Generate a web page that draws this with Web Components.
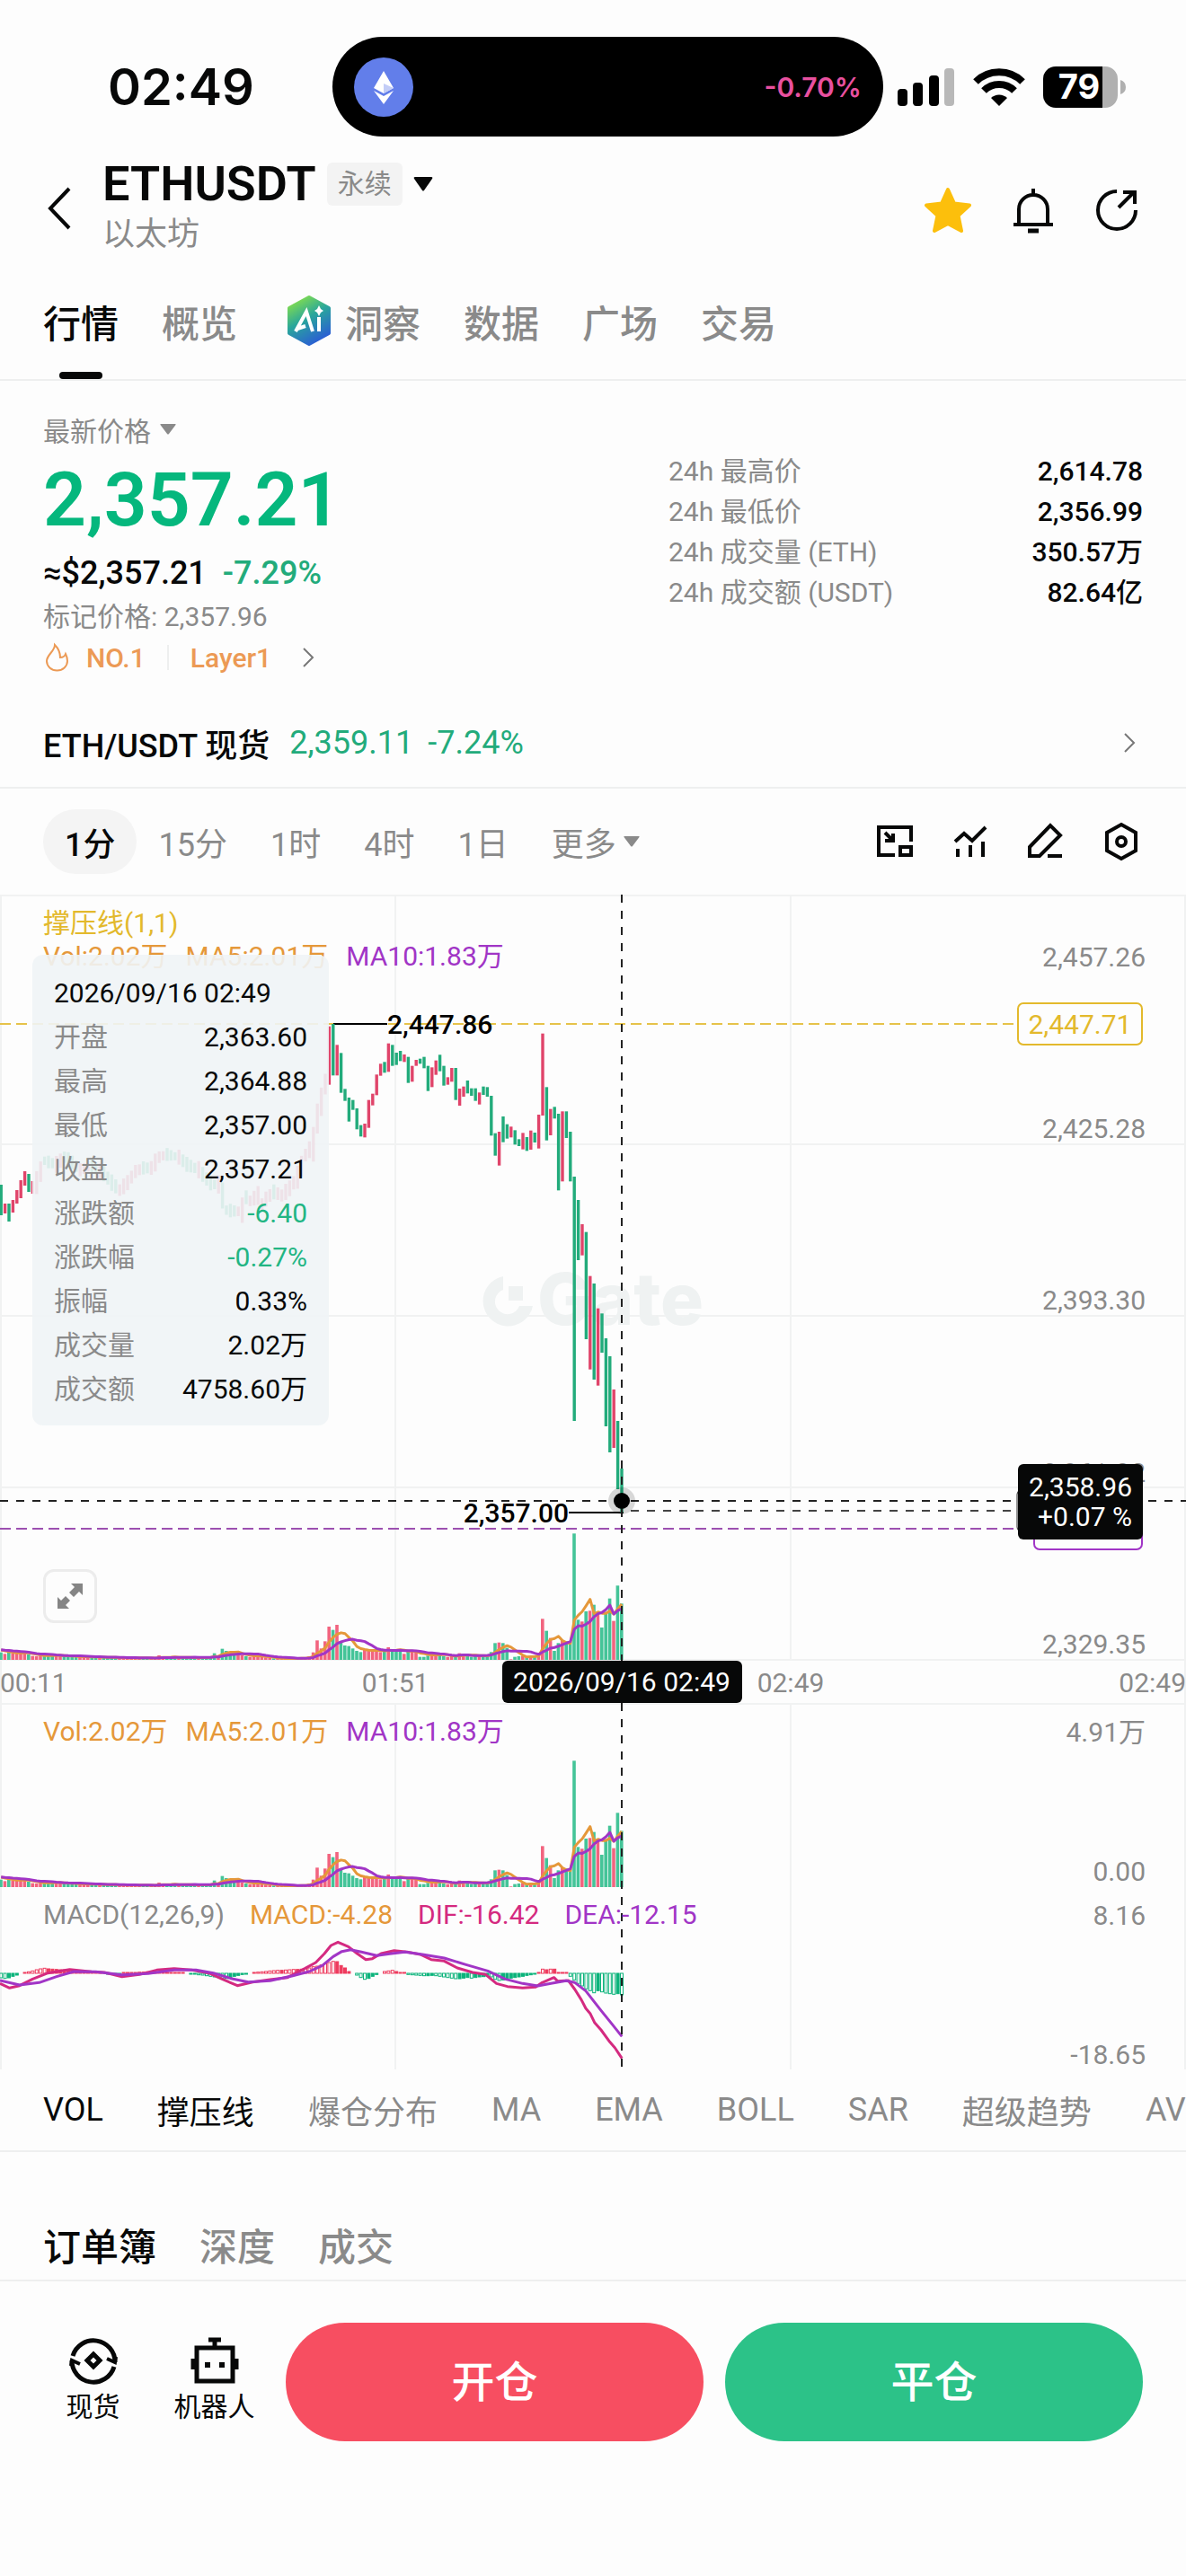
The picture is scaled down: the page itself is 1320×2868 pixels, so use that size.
<!DOCTYPE html>
<html lang="zh-CN">
<head>
<meta charset="utf-8">
<meta name="viewport" content="width=device-width, initial-scale=1">
<title>ETHUSDT</title>
<style>
	body {
		margin: 0;
		min-height: 100vh;
		background: #fdfdfd;
		color: #070808;
		font-family: Roboto, "Noto Sans CJK SC", sans-serif;
		font-size: 30px;
		--muted: #8a8a8a;
		--line: #eeefef;
		--up: #e0446a;
		--down: #22ab7b;
		--green: #05b77d;
		--orange: #e5983a;
		--purple: #a135c6;
		--pink: #d42a80;
		--yellow: #e3b92c;
	}
</style>
</head>
<body>
<status-bar></status-bar>
<market-header symbol="ETHUSDT" kind="永续">以太坊</market-header>
<tab-nav underline>
	<nav-tab active>行情</nav-tab>
	<nav-tab>概览</nav-tab>
	<nav-tab><ui-icon name="ai" slot="icon"></ui-icon>洞察</nav-tab>
	<nav-tab>数据</nav-tab>
	<nav-tab>广场</nav-tab>
	<nav-tab>交易</nav-tab>
</tab-nav>
<price-summary>
	<stat-row label="24h 最高价">2,614.78</stat-row>
	<stat-row label="24h 最低价">2,356.99</stat-row>
	<stat-row label="24h 成交量 (ETH)">350.57万</stat-row>
	<stat-row label="24h 成交额 (USDT)">82.64亿</stat-row>
</price-summary>
<spot-link></spot-link>
<interval-bar></interval-bar>
<kline-chart></kline-chart>
<indicator-bar></indicator-bar>
<tab-nav class="orders">
	<nav-tab active>订单簿</nav-tab>
	<nav-tab>深度</nav-tab>
	<nav-tab>成交</nav-tab>
</tab-nav>
<action-bar></action-bar>

<script>
const base = `
	*, *:before, *:after { box-sizing: border-box; }
	button {
		margin: 0;
		padding: 0;
		border: none;
		background: none;
		color: inherit;
		font: inherit;
		cursor: pointer;
	}
	a { color: inherit; text-decoration: none; }
	svg { display: block; }
`;

class BaseElement extends HTMLElement {
	constructor() {
		super();
		this.attachShadow({ mode: 'open' });
	}

	connectedCallback() {
		this.shadowRoot.innerHTML = `<style>${base}${this.css()}</style>${this.html()}`;
	}

	css() {
		return ':host { display: block; }';
	}
}

const line = (w, h, body, width = 4) =>
	`<svg width="${w}" height="${h}" viewBox="0 0 ${w} ${h}" fill="none" stroke="currentColor" stroke-width="${width}">${body}</svg>`;
const solid = (w, h, body) =>
	`<svg width="${w}" height="${h}" viewBox="0 0 ${w} ${h}" fill="currentColor">${body}</svg>`;

const icons = {
	back: line(28, 48, '<path d="M25 2 4 24l21 22"/>'),
	caret: solid(22, 16, '<path d="M2 0h18q2 0 1 2L12 15q-1 1-2 0L1 2Q0 0 2 0z"/>'),
	smallCaret: solid(18, 12, '<path d="M1 0h16q1 0 .5 1L10 11q-1 1-2 0L.5 1Q0 0 1 0z"/>'),
	chevron: line(14, 24, '<path d="M2 2l10 10L2 22"/>', 2),
	star: solid(54, 52, '<path fill="#fcbf0c" stroke="#fcbf0c" stroke-width="4" stroke-linejoin="round" d="M27 3l7 15.500 17 2-12.500 11.500 3.500 17L27 41l-15 8 3.500-17L3 20.500l17-2z"/>'),
	bell: line(48, 52, '<path d="M24 2v8M8 42V25a16 16 0 0 1 32 0v17M2 42h44"/><path d="M18 49h12" stroke-width="5"/>'),
	share: line(50, 50, '<path d="M25 4A21 21 0 1 0 46 25"/><path d="M27 22 44 5M32 5h13v13"/>', 4),
	ai: `<svg width="56" height="60" viewBox="0 0 56 60">
		<defs><linearGradient id="g" x1="0.2" y1="0" x2="0.7" y2="1">
			<stop offset="0" stop-color="#86e04a"/><stop offset="0.45" stop-color="#2aa79b"/><stop offset="1" stop-color="#2a5bd6"/>
		</linearGradient></defs>
		<path fill="url(#g)" stroke="url(#g)" stroke-width="4" stroke-linejoin="round" d="M32 4l22 12v28L32 56 10 44V16z"/>
		<g fill="none" stroke="#fff" stroke-width="4"><path d="M17 42 29 20l7 22M19 39l9-3"/><path d="M43 26v16"/></g>
		<path fill="#fff" d="M43 13l2 4 3 2-3 2-2 4-2-4-3-2 3-2z"/>
	</svg>`,
	flame: line(30, 34, '<path d="M13 3c0 7-9 11-9 18a11 10 0 0 0 23 0c0-4-1-6-2-8-1 3-3 4-6 4 0-6-2-10-6-14z"/>', 2),
	pip: line(48, 48, '<path d="M24 39H6V8h36v16"/><path d="M13 14l9 9M22 15v8h-9"/><path d="M30 30h12v9H30z"/>'),
	trend: line(48, 48, '<path d="M7 24 17 15l9 8L41 8M10 32v9M24 28v13M38 24v17"/>'),
	pen: line(48, 48, '<path d="M6 30 29 6l11 11-23 23H6zM26 40h16"/>'),
	hex: line(48, 48, '<path d="M24 5l16 9v20l-16 9-16-9V14z"/><circle cx="24" cy="24" r="5"/>'),
	expand: `<svg width="30" height="30" viewBox="0 0 30 30" fill="#858585"><path d="M16 1h13v13l-4-4-6 6-5-5 6-6zM14 29H1V16l4 4 5-5 5 5-5 5z"/></svg>`,
	spot: line(56, 56, '<path d="M5 23A24 24 0 0 1 52 30M51 35A24 24 0 0 1 4 28"/><path d="M28 21l7 7-7 7-7-7z"/><path d="M43 26l9 4 1-6M13 32l-9-4-1 6" stroke-width="4"/>', 5),
	robot: line(56, 56, '<path d="M8 14h40v37H8zM28 14V6M21 5h14M4 26v12M52 26v12"/><path d="M20 30v6M36 30v6" stroke-width="6"/>', 5)
};

class UiIcon extends BaseElement {
	css() {
		return ':host { display: block; flex: none; }';
	}

	html() {
		return icons[this.getAttribute('name')] || '';
	}
}

customElements.define('ui-icon', UiIcon);

class StatusBar extends BaseElement {
	css() {
		return `
		:host {
			display: grid;
			grid-template-columns: 28% 1fr 337px;
			align-items: center;
			padding-top: 41px;
			font-family: Inter, sans-serif;
			font-weight: 600;
		}
		.time { padding-left: 120px; font-size: 56px; }
		.island {
			display: flex;
			align-items: center;
			justify-content: space-between;
			height: 111px;
			padding: 0 24px;
			border-radius: 56px;
			background: #000;
			color: #e8509f;
		}
		.signals { display: flex; align-items: center; gap: 20px; padding-left: 16px; }
		`;
	}

	html() {
		return `
		<span class="time">02:49</span>
		<div class="island">
			<svg width="66" height="66" viewBox="0 0 66 66">
				<circle cx="33" cy="33" r="33" fill="#627eea"/>
				<path fill="#fff" d="M33 15 22 34l11 6 11-6zM22 37l11 15 11-15-11 6z"/>
				<path fill="#c3cdf7" d="M33 29v11l11-6z"/>
			</svg>
			<span>-0.70%</span>
		</div>
		<div class="signals">
			<svg width="64" height="44" viewBox="0 0 64 44">
				<rect y="24" width="11" height="19" rx="4"/>
				<rect x="17" y="17" width="11" height="26" rx="4"/>
				<rect x="35" y="9" width="11" height="34" rx="4"/>
				<rect x="52" y="1" width="11" height="42" rx="4" fill="#b8b8b8"/>
			</svg>
			<svg width="58" height="44" viewBox="0 0 58 44">
				<g fill="none" stroke="#000" stroke-width="8"><path d="M3 16a37 37 0 0 1 52 0M12 26a24 24 0 0 1 34 0"/></g>
				<path d="M29 43l-9-9a13 13 0 0 1 18 0z"/>
			</svg>
			<svg width="92" height="46" viewBox="0 0 92 46">
				<path fill="#b0b0b0" d="M65 0h4a14 14 0 0 1 14 14v18a14 14 0 0 1-14 14h-4zM86 15q6 2 6 8t-6 8z"/>
				<path d="M14 0h52v46H14A14 14 0 0 1 0 32V14A14 14 0 0 1 14 0z"/>
				<text x="40" y="36" fill="#fff" font-size="38" font-weight="700" text-anchor="middle">79</text>
			</svg>
		</div>
		`;
	}
}

customElements.define('status-bar', StatusBar);

class MarketHeader extends BaseElement {
	css() {
		return `
		:host { display: flex; align-items: center; padding: 24px 52px 0 52px; }
		.name { flex: 1; margin-left: 34px; }
		h1 {
			display: flex;
			align-items: center;
			gap: 12px;
			margin: 0;
			font-size: 54px;
			font-weight: 600;
			line-height: 58px;
		}
		.kind {
			padding: 0 12px;
			border-radius: 6px;
			background: #f3f3f3;
			color: var(--muted);
			font-size: 30px;
			font-weight: 400;
			line-height: 48px;
		}
		.sub { color: var(--muted); font-size: 36px; line-height: 54px; }
		.tools { display: flex; align-items: center; gap: 44px; padding-top: 4px; }
		`;
	}

	html() {
		return `
		<button aria-label="返回">${icons.back}</button>
		<div class="name">
			<h1>${this.getAttribute('symbol')}<span class="kind">${this.getAttribute('kind')}</span>${icons.caret}</h1>
			<div class="sub"><slot></slot></div>
		</div>
		<div class="tools">
			<button aria-label="收藏">${icons.star}</button>
			<button aria-label="提醒">${icons.bell}</button>
			<button aria-label="分享">${icons.share}</button>
		</div>
		`;
	}
}

customElements.define('market-header', MarketHeader);

class TabNav extends BaseElement {
	css() {
		return `
		:host {
			display: flex;
			gap: 48px;
			padding: 24px 48px 0;
			border-bottom: 2px solid var(--line);
			--tab-height: 90px;
			--tab-foot: 20px;
			--mark: block;
		}
		:host(.orders) {
			padding-top: 72px;
			--tab-height: 60px;
			--tab-foot: 10px;
			--mark: none;
		}
		`;
	}

	html() {
		return '<slot></slot>';
	}
}

customElements.define('tab-nav', TabNav);

class NavTab extends BaseElement {
	css() {
		return `
		:host { display: block; color: var(--muted); font-size: 42px; font-weight: 500; }
		:host([active]) { color: #070808; }
		button {
			display: flex;
			align-items: center;
			position: relative;
			height: calc(var(--tab-height) + var(--tab-foot));
			padding-bottom: var(--tab-foot);
		}
		::slotted(ui-icon) { margin-right: 16px; }
		:host([active]) button:after {
			content: '';
			display: var(--mark);
			position: absolute;
			left: calc(50% - 24px);
			bottom: 0;
			width: 48px;
			height: 8px;
			border-radius: 4px;
			background: #070808;
		}
		`;
	}

	html() {
		return '<button><slot name="icon"></slot><span><slot></slot></span></button>';
	}
}

customElements.define('nav-tab', NavTab);

class StatRow extends BaseElement {
	css() {
		return `
		:host { display: flex; justify-content: space-between; line-height: 45px; }
		.label { color: var(--muted); }
		.value { font-weight: 500; }
		`;
	}

	html() {
		return `<span class="label">${this.getAttribute('label')}</span><span class="value"><slot></slot></span>`;
	}
}

customElements.define('stat-row', StatRow);

class PriceSummary extends BaseElement {
	css() {
		return `
		:host { display: grid; grid-template-columns: 1fr 528px; padding: 30px 48px 0; }
		.row { display: flex; align-items: center; }
		.latest { gap: 10px; height: 48px; color: var(--muted); }
		.price { height: 108px; color: var(--green); font-size: 84px; font-weight: 600; }
		.change { gap: 18px; height: 56px; font-size: 36px; font-weight: 500; }
		.change span { color: #22ab7b; }
		.mark { height: 36px; color: var(--muted); }
		.tags { gap: 24px; height: 60px; color: #ec9a55; font-weight: 500; }
		.tags a { display: flex; align-items: center; gap: 18px; }
		.tags i { width: 2px; height: 28px; background: var(--line); }
		.tags .more { margin-left: 10px; color: #777; }
		.stats { padding-top: 48px; }
		`;
	}

	html() {
		return `
		<div>
			<button class="row latest">最新价格${icons.smallCaret}</button>
			<div class="row price">2,357.21</div>
			<div class="row change">≈$2,357.21<span>-7.29%</span></div>
			<div class="row mark">标记价格: 2,357.96</div>
			<div class="row tags">
				<a href="#rank">${icons.flame}NO.1</a><i></i><a href="#layer1">Layer1</a>
				<button class="more" aria-label="更多标签">${icons.chevron}</button>
			</div>
		</div>
		<div class="stats"><slot></slot></div>
		`;
	}
}

customElements.define('price-summary', PriceSummary);

class SpotLink extends BaseElement {
	css() {
		return `
		:host { display: block; margin-top: 20px; border-bottom: 2px solid var(--line); font-size: 36px; }
		a { display: flex; align-items: center; height: 94px; padding: 0 56px 4px 48px; }
		b { font-weight: 500; margin-right: 22px; }
		.quote { display: flex; flex: 1; gap: 16px; color: #22ab7b; }
		svg { color: #777; }
		`;
	}

	html() {
		return `<a href="#spot"><b>ETH/USDT 现货</b><span class="quote"><span>2,359.11</span><span>-7.24%</span></span>${icons.chevron}</a>`;
	}
}

customElements.define('spot-link', SpotLink);

class IntervalBar extends BaseElement {
	css() {
		return `
		:host {
			display: flex;
			align-items: center;
			justify-content: space-between;
			height: 118px;
			padding: 0 48px;
			font-size: 36px;
		}
		.list, .tools { display: flex; align-items: center; }
		.list button {
			display: flex;
			align-items: center;
			gap: 8px;
			height: 72px;
			padding: 0 24px;
			border-radius: 36px;
			color: var(--muted);
		}
		.list .active { background: #f4f4f4; color: #070808; font-weight: 500; }
		.tools { gap: 36px; }
		`;
	}

	html() {
		const items = ['1分', '15分', '1时', '4时', '1日'];
		return `
		<div class="list">
			${items.map((t, i) => `<button class="${i ? '' : 'active'}">${t}</button>`).join('')}
			<button>更多${icons.smallCaret}</button>
		</div>
		<div class="tools">
			<button aria-label="画中画">${icons.pip}</button>
			<button aria-label="指标">${icons.trend}</button>
			<button aria-label="画线">${icons.pen}</button>
			<button aria-label="设置">${icons.hex}</button>
		</div>
		`;
	}
}

customElements.define('interval-bar', IntervalBar);

// Chart drawing. Candles are one minute each, the last one sits on the crosshair.
const STEP = 4.4;
const LAST_X = 692;

// [direction, top, bottom] in thirds of a unit below y = 64
const firstCandles = 'g777-879 r840-873 g840-900 r828-870 r795-840 r762-822 r732-780 g741-801 r765-807';
const lastCandles =
	'r248-443 g240-412 r310-412 g337-470 g457-497 g486-566 g494-527 g522-592 g578-616 r573-619 ' +
	'r494-587 r473-512 r409-478 r373-413 g367-403 r305-400 g310-380 g336-377 g330-364 r342-367 ' +
	'g350-437 r380-433 r360-380 g356-373 g350-388 g380-464 r385-451 r362-410 g343-398 g380-446 ' +
	'r418-443 r387-433 g387-494 r456-513 r449-483 g429-472 g455-480 g455-497 r469-509 g449-477 ' +
	'g451-483 g480-613 g605-680 r600-713 g549-635 g575-623 r583-619 g595-643 g625-648 r604-659 ' +
	'g618-664 r596-660 g603-636 r543-656 r272-546 g451-629 r524-612 g517-556 g540-796 r532-766 ' +
	'g532-621 g600-766 g750-1566 g828-1029 r909-1013 g935-1293 r1082-1394 g1107-1428 r1190-1448 g1207-1338 ' +
	'g1290-1584 g1350-1671 r1461-1656 g1566-1794 g1725-1872';
const middlePath = [
	[9, 770], [11, 697], [14, 709], [16, 685], [18, 703], [20, 727], [23, 715], [26, 740], [28, 770], [30, 795],
	[32, 770], [34, 733], [36, 721], [38, 721], [40, 685], [42, 676], [45, 685], [47, 709], [49, 721], [50, 727],
	[52, 758], [53, 776], [55, 776], [56, 813], [57, 862], [60, 866], [61, 862], [62, 819], [63, 831], [65, 813],
	[66, 844], [67, 825], [69, 801], [71, 813], [73, 789], [75, 752], [77, 678], [79, 642], [80, 556], [81, 500],
	[82, 441], [83, 400]
];

const parseCandles = text =>
	text.split(' ').map(item => {
		const [top, bottom] = item.slice(1).split('-').map(Number);
		return { up: item[0] === 'r', top, bottom };
	});

function middleCandles() {
	const out = [];
	for (let i = 9; i < 83; i++) {
		const k = middlePath.findIndex(p => p[0] > i);
		const [x0, y0] = middlePath[k - 1];
		const [x1, y1] = middlePath[k];
		const slope = (y1 - y0) / (x1 - x0);
		const y = y0 + slope * (i - x0);
		const half = Math.abs(slope) / 2 + 12 + ((i * 7) % 11);
		out.push({ up: slope < 0 || i % 5 === 0, top: y - half, bottom: y + half });
	}
	return out;
}

const candles = [...parseCandles(firstCandles), ...middleCandles(), ...parseCandles(lastCandles)];

const volumes = [
	25, 20, 24, 22, 26, 24, 25, 18, 13, 12, 14, 15, 16, 15, 14, 15, 13, 12, 11, 10,
	11, 9, 10, 9, 8, 9, 8, 8, 7, 8, 7, 7, 6, 7, 6, 7, 6, 6, 6, 5,
	15, 8, 7, 9, 10, 8, 7, 8, 7, 9, 8, 7, 8, 10, 22, 14, 37, 30, 24, 22,
	18, 15, 12, 10, 14, 16, 10, 8, 6, 5, 4, 4, 5, 4, 5, 5, 6, 8, 12, 25,
	65, 38, 62, 111, 100, 117, 62, 48, 46, 38, 30, 26, 34, 34, 32, 30, 26, 28, 42, 30,
	34, 34, 20, 28, 32, 24, 10, 10, 14, 26, 22, 16, 12, 10, 12, 12, 22, 20, 16, 10,
	12, 14, 18, 14, 26, 56, 58, 56, 40, 2, 10, 12, 14, 10, 8, 12, 20, 137, 97, 73,
	30, 56, 66, 62, 60, 422, 134, 128, 162, 164, 184, 160, 108, 160, 205, 130, 248, 188
];

const macd = [
	-15, -17, -15, -10, -6, 0, 3, 5, 8, 12, 15, 17, 15, 14, 13, 12, 12, 10, 8, 6,
	5, 4, 3, 2, 1, 1, 0, -1, -2, -2, -1, 1, 2, 2, 3, 4, 4, 5, 5, 4,
	4, 3, 3, 2, 2, 1, 1, 0, -1, -3, -5, -6, -8, -10, -12, -14, -16, -17, -14, -10,
	-7, -4, -2, 0, 2, 4, 5, 6, 8, 9, 10, 10, 11, 12, 13, 13, 14, 16, 18, 22,
	24, 28, 33, 36, 40, 39, 26, 18, 6, 0, -6, -14, -20, -17, -10, -4, 0, 6, 8, 10,
	6, 3, 2, -4, -5, -6, -7, -8, -8, -7, -8, -10, -12, -14, -16, -18, -18, -16, -14, -16,
	-14, -12, -11, -10, -12, -20, -24, -22, -20, -16, -14, -12, -10, -7, -5, -2, 2, 14, 12, 14,
	14, 2, 2, 1, -10, -22, -34, -42, -52, -58, -65, -58, -62, -66, -68, -70, -68, -72
];

const difLine =
	'0,985 22,1000 45,992 75,970 110,950 160,938 210,946 240,948 280,962 320,955 360,940 400,935 440,940 480,950 ' +
	'510,970 545,992 580,980 620,972 660,965 700,935 725,915 745,885 760,858 776,847 800,862 820,885 840,905 ' +
	'855,902 875,885 905,875 935,880 965,888 990,905 1020,910 1050,933 1085,948 1115,955 1140,985 1165,995 ' +
	'1200,1000 1230,997 1245,982 1272,965 1280,977 1305,975 1320,1005 1335,1040 1345,1068 1355,1085 1365,1115 ' +
	'1380,1140 1400,1180 1412,1200 1428,1235';
const deaLine =
	'0,975 45,990 90,982 130,962 170,945 220,946 280,956 340,952 400,940 450,940 490,950 530,968 570,980 620,976 ' +
	'670,960 710,945 740,925 765,895 785,878 805,872 830,880 865,892 895,886 930,880 970,888 1020,900 1070,922 ' +
	'1120,943 1160,970 1200,985 1235,993 1265,985 1300,976 1320,982 1345,1010 1380,1075 1405,1120 1428,1162';

const xAt = i => LAST_X - (candles.length - 1 - i) * STEP;

const drawCandles = () =>
	candles
		.map(({ up, top, bottom }, i) =>
			`<rect x="${xAt(i) - 1.7}" y="${64 + top / 3}" width="3.400" height="${(bottom - top) / 3}" fill="var(--${up ? 'up' : 'down'})"/>`)
		.join('');

function average(size) {
	return volumes
		.map((v, i) => {
			let sum = 0;
			for (let k = 0; k < size; k++) {
				sum += i - k < 0 ? 35 : volumes[i - k];
			}
			return `${xAt(i)},${-sum / size / 3}`;
		})
		.join(' ');
}

const drawVolume = y => `
	<g transform="translate(0 ${y})">
		${volumes.map((v, i) =>
			`<rect x="${xAt(i) - 2}" y="${-v / 3}" width="3.600" height="${v / 3}" fill="${candles[i].up ? '#f2647f' : '#44c498'}"/>`).join('')}
		<g fill="none" stroke-width="3" stroke-linejoin="round">
			<polyline stroke="var(--orange)" points="${average(5)}"/>
			<polyline stroke="var(--purple)" points="${average(10)}"/>
		</g>
	</g>`;

// a bar is hollow while the histogram grows and filled while it shrinks
const drawMacdBars = () =>
	macd
		.map((v, i) => {
			if (!v) return '';
			const hollow = Math.abs(v) > Math.abs(macd[i - 1] || 0);
			const color = v > 0 ? '#ee3b5e' : '#0bb37b';
			const h = Math.max(Math.abs(v) / 3, 1);
			return `<rect x="${xAt(i) - 1.5}" y="${v > 0 ? 1201 - h : 1201}" width="3" height="${h}" fill="${hollow ? '#fdfdfd' : color}" stroke="${color}"/>`;
		})
		.join('');

const traceLine = text =>
	text
		.split(' ')
		.map(p => {
			const [x, y] = p.split(',');
			return `${x / 2.063},${884 + y / 3}`;
		})
		.join(' ');

class KlineChart extends BaseElement {
	css() {
		return `
		:host { display: block; position: relative; overflow: hidden; }
		.plot { width: 100%; height: auto; font-size: 30px; }
		.axis { fill: var(--muted); }
		.end { text-anchor: end; }
		.mid { text-anchor: middle; }
		.legend { position: absolute; left: 48px; display: flex; gap: 20px; line-height: 36px; white-space: nowrap; }
		.support { top: 14px; color: var(--yellow); }
		.main { top: 51px; }
		.vol { top: 914px; }
		.macd { top: 1118px; gap: 28px; color: var(--muted); }
		.orange { color: var(--orange); }
		.purple { color: var(--purple); }
		.pink { color: var(--pink); }
		.expand {
			position: absolute;
			left: 48px;
			top: 751px;
			display: grid;
			place-items: center;
			width: 60px;
			height: 60px;
			border: 3px solid #ececec;
			border-radius: 12px;
			background: #fdfdfd;
		}
		`;
	}

	html() {
		return `
		<svg class="plot" viewBox="0 0 1320 1308">
			<g stroke="#f1f2f2" stroke-width="2">
				<path d="M0 1h1320M0 278h1320M0 469h1320M0 660h1320M0 852h1320M0 901h1320"/>
				<path d="M1 0v1308M440 0v852M440 901v407M880 0v852M880 901v407M1319 0v1308"/>
			</g>
			<g fill="#eff2f2">
				<path d="M560 425a28 28 0 1 0 33 33h-15a14 14 0 1 1-18-18z"/>
				<path d="M566 436h16v16h-16z"/>
				<text x="598" y="479" font-family="Inter" font-size="80" font-weight="800">Gate</text>
			</g>
			<path d="M0 144h1132" stroke="#e6c34a" stroke-width="2" stroke-dasharray="12 6"/>
			<path d="M371 144h60M633 688h61" stroke="#000" stroke-width="2"/>
			${drawCandles()}
			${drawVolume(852)}
			${drawVolume(1105)}
			${drawMacdBars()}
			<g fill="none" stroke-width="3" stroke-linejoin="round">
				<polyline stroke="var(--pink)" points="${traceLine(difLine)}"/>
				<polyline stroke="var(--purple)" points="${traceLine(deaLine)}"/>
			</g>
			<path d="M702 686h430" stroke="#444" stroke-width="2" stroke-dasharray="9 9"/>
			<path d="M0 706h1150" stroke="#9c50b0" stroke-width="2" stroke-dasharray="12 6"/>
			<path d="M0 675h1320M692 0v1308" stroke="#222" stroke-width="2" stroke-dasharray="9 9"/>
			<circle cx="692" cy="675" r="15" fill="#000" opacity="0.15"/>
			<circle cx="692" cy="675" r="9"/>
			<text x="431" y="155" font-weight="500">2,447.86</text>
			<text x="633" y="699" font-weight="500" class="end">2,357.00</text>
			<g class="axis end">
				<text x="1275" y="80">2,457.26</text>
				<text x="1275" y="271">2,425.28</text>
				<text x="1275" y="462">2,393.30</text>
				<text x="1275" y="654">2,361.32</text>
				<text x="1275" y="845">2,329.35</text>
				<text x="1275" y="943">4.91万</text>
				<text x="1275" y="1098">0.00</text>
				<text x="1275" y="1147">8.16</text>
				<text x="1275" y="1302">-18.65</text>
				<text x="1320" y="888">02:49</text>
			</g>
			<g class="axis">
				<text x="0" y="888">00:11</text>
				<text x="440" y="888" class="mid">01:51</text>
				<text x="880" y="888" class="mid">02:49</text>
			</g>
			<rect x="1133" y="121" width="138" height="46" rx="6" fill="#fdfdfd" stroke="var(--yellow)" stroke-width="2"/>
			<text x="1202" y="155" class="mid" fill="var(--yellow)">2,447.71</text>
			<rect x="1151" y="683" width="120" height="46" rx="6" fill="#fdfdfd" stroke="var(--purple)" stroke-width="2"/>
			<rect x="1132" y="662" width="138" height="48" rx="6" fill="#fdfdfd" stroke="#222"/>
			<rect x="1133" y="634" width="139" height="84" rx="6" fill="#070808"/>
			<g fill="#fff" class="end">
				<text x="1260" y="670">2,358.96</text>
				<text x="1260" y="703">+0.07 %</text>
			</g>
			<rect x="559" y="853" width="267" height="47" rx="6" fill="#070808"/>
			<text x="692" y="887" class="mid" fill="#fff">2026/09/16 02:49</text>
		</svg>
		<div class="legend support">撑压线(1,1)</div>
		<div class="legend main orange"><span>Vol:2.02万</span><span>MA5:2.01万</span><span class="purple">MA10:1.83万</span></div>
		<div class="legend vol orange"><span>Vol:2.02万</span><span>MA5:2.01万</span><span class="purple">MA10:1.83万</span></div>
		<div class="legend macd"><span>MACD(12,26,9)</span><span class="orange">MACD:-4.28</span><span class="pink">DIF:-16.42</span><span class="purple">DEA:-12.15</span></div>
		<candle-tooltip></candle-tooltip>
		<button class="expand" aria-label="全屏">${icons.expand}</button>
		`;
	}
}

customElements.define('kline-chart', KlineChart);

class CandleTooltip extends BaseElement {
	css() {
		return `
		:host {
			display: block;
			position: absolute;
			left: 36px;
			top: 67px;
			width: 330px;
			padding: 18px 24px 16px;
			border-radius: 12px;
			background: rgba(239, 244, 246, 0.9);
			line-height: 49px;
		}
		table { width: 100%; border-collapse: collapse; }
		caption { text-align: left; }
		th, td { padding: 0; height: 49px; font-weight: 400; }
		th { text-align: left; color: var(--muted); }
		td { text-align: right; }
		.down { color: #22b583; }
		`;
	}

	html() {
		const rows = [
			['开盘', '2,363.60'],
			['最高', '2,364.88'],
			['最低', '2,357.00'],
			['收盘', '2,357.21'],
			['涨跌额', '-6.40', 'down'],
			['涨跌幅', '-0.27%', 'down'],
			['振幅', '0.33%'],
			['成交量', '2.02万'],
			['成交额', '4758.60万']
		];
		return `
		<table>
			<caption>2026/09/16 02:49</caption>
			${rows.map(([label, value, cls = '']) => `<tr><th scope="row">${label}</th><td class="${cls}">${value}</td></tr>`).join('')}
		</table>
		`;
	}
}

customElements.define('candle-tooltip', CandleTooltip);

class IndicatorBar extends BaseElement {
	css() {
		return `
		:host {
			display: flex;
			align-items: center;
			gap: 60px;
			height: 90px;
			padding-left: 48px;
			border-bottom: 2px solid var(--line);
			overflow: hidden;
			color: var(--muted);
			font-size: 36px;
		}
		button { flex: none; }
		.on { color: #070808; }
		`;
	}

	html() {
		const names = ['VOL', '撑压线', '爆仓分布', 'MA', 'EMA', 'BOLL', 'SAR', '超级趋势', 'AV'];
		return names.map((n, i) => `<button class="${i < 2 ? 'on' : ''}">${n}</button>`).join('');
	}
}

customElements.define('indicator-bar', IndicatorBar);

class ActionBar extends BaseElement {
	css() {
		return `
		:host { display: flex; align-items: center; padding: 46px 48px 0 36px; }
		.shortcut {
			display: flex;
			flex-direction: column;
			align-items: center;
			gap: 4px;
			width: 135px;
			padding-bottom: 4px;
			line-height: 40px;
		}
		.trade { display: flex; flex: 1; gap: 24px; margin-left: 12px; }
		.trade button {
			flex: 1;
			height: 132px;
			padding-bottom: 8px;
			border-radius: 66px;
			color: #fff;
			font-size: 48px;
			font-weight: 500;
		}
		.open { background: #f74e61; }
		.close { background: #2cc288; }
		`;
	}

	html() {
		return `
		<button class="shortcut">${icons.spot}现货</button>
		<button class="shortcut">${icons.robot}机器人</button>
		<div class="trade">
			<button class="open">开仓</button>
			<button class="close">平仓</button>
		</div>
		`;
	}
}

customElements.define('action-bar', ActionBar);
</script>
</body>
</html>
